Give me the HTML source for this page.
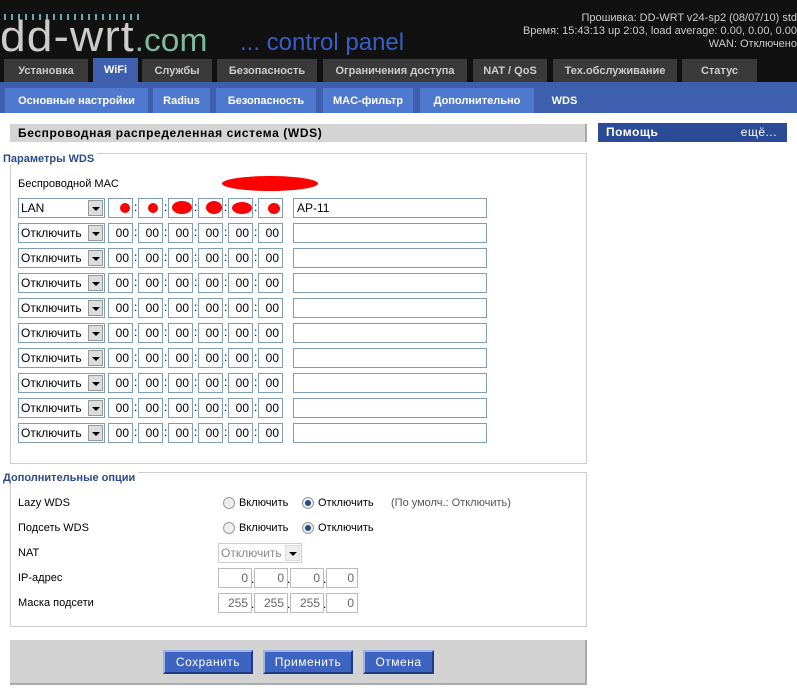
<!DOCTYPE html><html><head><meta charset="utf-8"><style>
*{box-sizing:border-box;margin:0;padding:0}
body{width:797px;height:693px;position:relative;background:#fff;font-family:"Liberation Sans",sans-serif;font-size:11px;color:#000;overflow:hidden}
.a{position:absolute}
#hd{left:0;top:0;width:797px;height:82px;background:#111}
#bb{left:0;top:82px;width:797px;height:31px;background:#3d5fae}
.tab{position:absolute;top:59px;height:23px;background:#3a3a3a;color:#ccc;font-weight:bold;font-size:11px;text-align:center;line-height:24px}
.tab.on{background:#3d5fae;color:#fff;top:58px;height:24px}
.st{position:absolute;top:88px;height:25px;background:#4f79cf;color:#fff;font-weight:bold;font-size:11px;text-align:center;line-height:26px}
.st.on{background:#3d5fae}
.fs{position:absolute;border:1px solid #ccc}
.lg{position:absolute;color:#2c4b8c;font-weight:bold;font-size:11px}
.sel{position:absolute;height:20px;width:87px;border:1px solid #7f9db9;background:#fff;padding-left:2px;line-height:18px;font-size:12px}
.sel i{position:absolute;right:1px;top:1px;width:15px;height:16px;background:#ddd;border:1px solid #999}
.sel i:after{content:"";position:absolute;left:3px;top:6px;border:4px solid transparent;border-top:4px solid #000}
.m{position:absolute;height:20px;width:25px;border:1px solid #7f9db9;background:#fff;text-align:right;padding-right:3px;line-height:18px;font-size:12px}
.c{position:absolute;font-size:12px}
.t{position:absolute;height:20px;width:194px;border:1px solid #7f9db9;background:#fff;padding-left:3px;line-height:18px;font-size:12px}
.r{position:absolute;width:12px;height:12px;border-radius:50%;border:1px solid #999;background:#eee}
.r.on:after{content:"";position:absolute;left:2px;top:2px;width:6px;height:6px;border-radius:50%;background:#224c88}
.btn{position:absolute;top:650px;height:24px;background:#3d64c0;color:#fff;border:2px solid;border-color:#9bb4ea #1e3a80 #1e3a80 #9bb4ea;font-size:12px;text-align:center;line-height:20px;letter-spacing:.5px}
.red{position:absolute;background:#f00;border-radius:50%}
</style></head><body>
<div id="hd" class="a"></div>
<div class="a" style="left:4px;top:14px;width:136px;height:6px;background:repeating-linear-gradient(90deg,#6aa 0 2px,transparent 2px 7px)"></div>
<div class="a" style="left:0;top:12px;font-size:44px;color:#ccc;letter-spacing:1px;font-family:'Liberation Sans',sans-serif;transform:scaleX(1.05);transform-origin:left">dd-wrt<span style="color:#7fb8a0;font-size:32px;letter-spacing:0">.com</span></div>
<div class="a" style="left:240px;top:29px;font-size:24px;color:#3a5ec4">... control panel</div>
<div class="a" style="right:0;top:12px;color:#ccc;font-size:11px;text-align:right;line-height:13px">Прошивка: DD-WRT v24-sp2 (08/07/10) std<br>Время: 15:43:13 up 2:03, load average: 0.00, 0.00, 0.00<br>WAN: Отключено</div>
<div id="bb" class="a"></div>
<div class="tab" style="left:4px;width:84px">Установка</div>
<div class="tab on" style="left:93px;width:45px">WiFi</div>
<div class="tab" style="left:142px;width:70px">Службы</div>
<div class="tab" style="left:217px;width:100px">Безопасность</div>
<div class="tab" style="left:323px;width:144px">Ограничения доступа</div>
<div class="tab" style="left:473px;width:74px">NAT / QoS</div>
<div class="tab" style="left:553px;width:124px">Тех.обслуживание</div>
<div class="tab" style="left:682px;width:75px">Статус</div>
<div class="st" style="left:5px;width:143px">Основные настройки</div>
<div class="st" style="left:153px;width:57px">Radius</div>
<div class="st" style="left:216px;width:100px">Безопасность</div>
<div class="st" style="left:323px;width:90px">MAC-фильтр</div>
<div class="st" style="left:420px;width:114px">Дополнительно</div>
<div class="st on" style="left:541px;width:47px">WDS</div>

<div class="a" style="left:10px;top:124px;width:577px;height:18px;background:#d4d4d4;border-right:2px solid #aaa;font-weight:bold;font-size:12px;letter-spacing:.6px;padding-left:8px;line-height:18px">Беспроводная распределенная система (WDS)</div>
<div class="a" style="left:598px;top:123px;width:189px;height:19px;background:#2c4b96;color:#fff;font-weight:bold;font-size:12px;padding-left:8px;line-height:19px;letter-spacing:.5px">Помощь<span style="position:absolute;right:10px;font-weight:normal">ещё...</span></div>

<div class="fs" style="left:10px;top:153px;width:577px;height:311px"></div>
<div class="lg" style="left:3px;top:153px;background:#fff;padding-right:3px">Параметры WDS</div>
<div class="c" style="left:18px;top:178px;font-size:11px">Беспроводной MAC</div>
<div class="red" style="left:222px;top:176px;width:96px;height:15px"></div>

<div class="sel" style="left:18px;top:198px">LAN<i></i></div>
<div class="m" style="left:108px;top:198px"></div><div class="m" style="left:138px;top:198px"></div><div class="m" style="left:168px;top:198px"></div><div class="m" style="left:198px;top:198px"></div><div class="m" style="left:228px;top:198px"></div><div class="m" style="left:258px;top:198px"></div>
<div class="red" style="left:120px;top:203px;width:10px;height:10px"></div><div class="red" style="left:148px;top:203px;width:10px;height:10px"></div><div class="red" style="left:172px;top:201px;width:20px;height:13px"></div><div class="red" style="left:206px;top:201px;width:16px;height:13px"></div><div class="red" style="left:232px;top:202px;width:20px;height:12px"></div><div class="red" style="left:268px;top:203px;width:12px;height:11px"></div>
<div class="t" style="left:293px;top:198px">AP-11</div>
<div class="sel" style="left:18px;top:223px">Отключить<i></i></div><div class="m" style="left:108px;top:223px">00</div><div class="m" style="left:138px;top:223px">00</div><div class="m" style="left:168px;top:223px">00</div><div class="m" style="left:198px;top:223px">00</div><div class="m" style="left:228px;top:223px">00</div><div class="m" style="left:258px;top:223px">00</div><div class="t" style="left:293px;top:223px"></div>
<div class="sel" style="left:18px;top:248px">Отключить<i></i></div><div class="m" style="left:108px;top:248px">00</div><div class="m" style="left:138px;top:248px">00</div><div class="m" style="left:168px;top:248px">00</div><div class="m" style="left:198px;top:248px">00</div><div class="m" style="left:228px;top:248px">00</div><div class="m" style="left:258px;top:248px">00</div><div class="t" style="left:293px;top:248px"></div>
<div class="sel" style="left:18px;top:273px">Отключить<i></i></div><div class="m" style="left:108px;top:273px">00</div><div class="m" style="left:138px;top:273px">00</div><div class="m" style="left:168px;top:273px">00</div><div class="m" style="left:198px;top:273px">00</div><div class="m" style="left:228px;top:273px">00</div><div class="m" style="left:258px;top:273px">00</div><div class="t" style="left:293px;top:273px"></div>
<div class="sel" style="left:18px;top:298px">Отключить<i></i></div><div class="m" style="left:108px;top:298px">00</div><div class="m" style="left:138px;top:298px">00</div><div class="m" style="left:168px;top:298px">00</div><div class="m" style="left:198px;top:298px">00</div><div class="m" style="left:228px;top:298px">00</div><div class="m" style="left:258px;top:298px">00</div><div class="t" style="left:293px;top:298px"></div>
<div class="sel" style="left:18px;top:323px">Отключить<i></i></div><div class="m" style="left:108px;top:323px">00</div><div class="m" style="left:138px;top:323px">00</div><div class="m" style="left:168px;top:323px">00</div><div class="m" style="left:198px;top:323px">00</div><div class="m" style="left:228px;top:323px">00</div><div class="m" style="left:258px;top:323px">00</div><div class="t" style="left:293px;top:323px"></div>
<div class="sel" style="left:18px;top:348px">Отключить<i></i></div><div class="m" style="left:108px;top:348px">00</div><div class="m" style="left:138px;top:348px">00</div><div class="m" style="left:168px;top:348px">00</div><div class="m" style="left:198px;top:348px">00</div><div class="m" style="left:228px;top:348px">00</div><div class="m" style="left:258px;top:348px">00</div><div class="t" style="left:293px;top:348px"></div>
<div class="sel" style="left:18px;top:373px">Отключить<i></i></div><div class="m" style="left:108px;top:373px">00</div><div class="m" style="left:138px;top:373px">00</div><div class="m" style="left:168px;top:373px">00</div><div class="m" style="left:198px;top:373px">00</div><div class="m" style="left:228px;top:373px">00</div><div class="m" style="left:258px;top:373px">00</div><div class="t" style="left:293px;top:373px"></div>
<div class="sel" style="left:18px;top:398px">Отключить<i></i></div><div class="m" style="left:108px;top:398px">00</div><div class="m" style="left:138px;top:398px">00</div><div class="m" style="left:168px;top:398px">00</div><div class="m" style="left:198px;top:398px">00</div><div class="m" style="left:228px;top:398px">00</div><div class="m" style="left:258px;top:398px">00</div><div class="t" style="left:293px;top:398px"></div>
<div class="sel" style="left:18px;top:423px">Отключить<i></i></div><div class="m" style="left:108px;top:423px">00</div><div class="m" style="left:138px;top:423px">00</div><div class="m" style="left:168px;top:423px">00</div><div class="m" style="left:198px;top:423px">00</div><div class="m" style="left:228px;top:423px">00</div><div class="m" style="left:258px;top:423px">00</div><div class="t" style="left:293px;top:423px"></div>
<div class="c" style="left:134px;top:200px">:</div><div class="c" style="left:164px;top:200px">:</div><div class="c" style="left:194px;top:200px">:</div><div class="c" style="left:224px;top:200px">:</div><div class="c" style="left:254px;top:200px">:</div>
<div class="a" style="left:134px;top:220px;font-size:12px;line-height:25px">:<br>:<br>:<br>:<br>:<br>:<br>:<br>:<br>:</div>
<div class="a" style="left:164px;top:220px;font-size:12px;line-height:25px">:<br>:<br>:<br>:<br>:<br>:<br>:<br>:<br>:</div>
<div class="a" style="left:194px;top:220px;font-size:12px;line-height:25px">:<br>:<br>:<br>:<br>:<br>:<br>:<br>:<br>:</div>
<div class="a" style="left:224px;top:220px;font-size:12px;line-height:25px">:<br>:<br>:<br>:<br>:<br>:<br>:<br>:<br>:</div>
<div class="a" style="left:254px;top:220px;font-size:12px;line-height:25px">:<br>:<br>:<br>:<br>:<br>:<br>:<br>:<br>:</div>

<div class="fs" style="left:10px;top:472px;width:577px;height:155px"></div>
<div class="lg" style="left:3px;top:472px;background:#fff;padding-right:3px">Дополнительные опции</div>
<div class="c" style="left:18px;top:497px;font-size:11px">Lazy WDS</div>
<div class="r" style="left:223px;top:497px"></div><div class="c" style="left:239px;top:497px;font-size:11px">Включить</div>
<div class="r on" style="left:302px;top:497px"></div><div class="c" style="left:318px;top:497px;font-size:11px">Отключить</div>
<div class="c" style="left:391px;top:497px;font-size:11px;color:#555">(По умолч.: Отключить)</div>
<div class="c" style="left:18px;top:522px;font-size:11px">Подсеть WDS</div>
<div class="r" style="left:223px;top:522px"></div><div class="c" style="left:239px;top:522px;font-size:11px">Включить</div>
<div class="r on" style="left:302px;top:522px"></div><div class="c" style="left:318px;top:522px;font-size:11px">Отключить</div>
<div class="c" style="left:18px;top:547px;font-size:11px">NAT</div>
<div class="sel" style="left:218px;top:543px;width:84px;color:#888;border-color:#ccc">Отключить<i style="background:#eee;border-color:#ddd"></i></div>
<div class="c" style="left:18px;top:572px;font-size:11px">IP-адрес</div>
<div class="c" style="left:18px;top:597px;font-size:11px">Маска подсети</div>
<div class="m" style="left:218px;top:568px;width:34px;border-color:#bbb;color:#666">0</div><div class="m" style="left:254px;top:568px;width:34px;border-color:#bbb;color:#666">0</div><div class="m" style="left:290px;top:568px;width:34px;border-color:#bbb;color:#666">0</div><div class="m" style="left:326px;top:568px;width:32px;border-color:#bbb;color:#666">0</div>
<div class="m" style="left:218px;top:593px;width:34px;border-color:#bbb;color:#666">255</div><div class="m" style="left:254px;top:593px;width:34px;border-color:#bbb;color:#666">255</div><div class="m" style="left:290px;top:593px;width:34px;border-color:#bbb;color:#666">255</div><div class="m" style="left:326px;top:593px;width:32px;border-color:#bbb;color:#666">0</div>
<div class="c" style="left:251px;top:572px">.</div><div class="c" style="left:287px;top:572px">.</div><div class="c" style="left:323px;top:572px">.</div>
<div class="c" style="left:251px;top:597px">.</div><div class="c" style="left:287px;top:597px">.</div><div class="c" style="left:323px;top:597px">.</div>

<div class="a" style="left:10px;top:640px;width:577px;height:45px;background:#d2d2d2;border-right:2px solid #aaa;border-bottom:2px solid #aaa"></div>
<div class="btn" style="left:163px;width:90px">Сохранить</div>
<div class="btn" style="left:263px;width:90px">Применить</div>
<div class="btn" style="left:363px;width:71px">Отмена</div>
</body></html>
